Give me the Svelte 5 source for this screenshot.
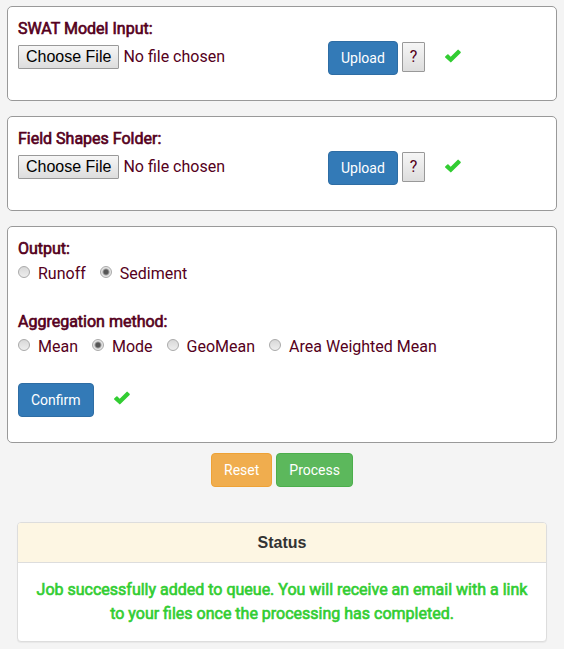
<script>
  const uploads = [
    { id: 'swat-model', label: 'SWAT Model Input:' },
    { id: 'field-shapes', label: 'Field Shapes Folder:' }
  ];
  const outputs = ['Runoff', 'Sediment'];
  const methods = ['Mean', 'Mode', 'GeoMean', 'Area Weighted Mean'];

  let output = $state('Sediment');
  let method = $state('Mode');

  function reset() {
    output = 'Sediment';
    method = 'Mode';
  }
</script>

{#snippet check()}
  <svg class="check" width="18" height="16" viewBox="0 0 18 16" role="img" aria-label="Done">
    <path d="M1.2 8.6 3.3 6.6Q3.9 6.1 4.5 6.6L6.7 8.7 13.5 1.9Q14.1 1.3 14.7 1.9L16.6 3.8Q17.1 4.4 16.6 5L7.4 14.1Q6.8 14.7 6.2 14.1L1.2 9.6Q.7 9.1 1.2 8.6Z" />
  </svg>
{/snippet}

<main>
  {#each uploads as item}
    <section class="card upload">
      <label class="heading" for={item.id}>{item.label}</label>
      <div class="upload-row">
        <input class="file" type="file" id={item.id} />
        <button class="btn primary" type="button">Upload</button>
        <button class="help" type="button">?</button>
        {@render check()}
      </div>
    </section>
  {/each}

  <section class="card options">
    <fieldset>
      <legend class="heading">Output:</legend>
      <div class="choices">
        {#each outputs as name}
          <label><input type="radio" name="output" value={name} bind:group={output} />{name}</label>
        {/each}
      </div>
    </fieldset>
    <fieldset>
      <legend class="heading">Aggregation method:</legend>
      <div class="choices">
        {#each methods as name}
          <label><input type="radio" name="method" value={name} bind:group={method} />{name}</label>
        {/each}
      </div>
    </fieldset>
    <div class="confirm">
      <button class="btn primary" type="button">Confirm</button>
      {@render check()}
    </div>
  </section>

  <div class="actions">
    <button class="btn warning" type="button" onclick={reset}>Reset</button>
    <button class="btn success" type="button">Process</button>
  </div>

  <section class="status">
    <h2>Status</h2>
    <p>Job successfully added to queue. You will receive an email with a link to your files once the processing has completed.</p>
  </section>
</main>

<style>
  :global(body) {
    background: #f4f4f4;
  }

  main {
    padding: 6px 7px 7px;
    font: 16px/24px Roboto, sans-serif;
    color: #550020;
  }

  main,
  main * {
    box-sizing: border-box;
  }

  .card {
    margin-bottom: 15px;
    padding: 10px 10px 25px;
    background: #fff;
    border: 1px solid #999;
    border-radius: 5px;
  }

  .heading {
    display: block;
    padding: 0;
    -webkit-text-stroke: 0.04em currentColor;
  }

  .upload-row {
    display: flex;
    align-items: center;
  }

  .file {
    flex: 0 1 310px;
    min-width: 0;
    height: 24px;
    margin: 0 0 3px;
    font: inherit;
    color: inherit;
  }

  .file::file-selector-button {
    height: 24px;
    margin: 0 4px 0 0;
    padding: 0 7px;
    font: 16px/20px "Liberation Sans", Arial, sans-serif;
    color: #000;
    background: linear-gradient(#f6f6f6, #ddd);
    border: 1px solid #999;
    border-radius: 1px;
  }

  .btn {
    height: 34px;
    padding: 6px 12px;
    font: 14px/20px Roboto, sans-serif;
    color: #fff;
    border: 1px solid;
    border-radius: 4px;
  }

  .primary {
    background: #337ab7;
    border-color: #2e6da4;
  }

  .warning {
    background: #f0ad4e;
    border-color: #eea236;
  }

  .success {
    background: #5cb85c;
    border-color: #4cae4c;
  }

  .help {
    height: 30px;
    margin: 0 19px 2px 4px;
    padding: 0 7px;
    font: 16px/24px Roboto, sans-serif;
    color: #550020;
    background: linear-gradient(#f6f6f6, #ddd);
    border: 1px solid #999;
    border-radius: 1px;
  }

  .check {
    flex: none;
    margin-bottom: 4px;
    fill: #32cd32;
  }

  fieldset {
    min-width: 0;
    margin: 0 0 24px;
    padding: 0;
    border: 0;
  }

  .choices {
    display: flex;
    flex-wrap: wrap;
    gap: 0 14px;
    padding-top: 1px;
  }

  .choices label {
    display: flex;
    gap: 8px;
  }

  .choices input {
    appearance: none;
    width: 12px;
    height: 12px;
    margin: 4px 0 0;
    background: linear-gradient(#d8d8d8, #eee);
    border: 1px solid #aaa;
    border-radius: 50%;
  }

  .choices input:checked {
    background: radial-gradient(circle, #555 0 2px, #e4e4e4 4px);
  }

  .confirm {
    display: flex;
    align-items: center;
    gap: 19px;
  }

  .actions {
    display: flex;
    justify-content: center;
    gap: 4px;
    margin: -5px 0 35px;
  }

  .status {
    margin: 0 10px;
    text-align: center;
    background: #fff;
    border: 1px solid #ddd;
    border-radius: 4px;
    box-shadow: 0 1px 1px rgba(0, 0, 0, 0.05);
  }

  h2 {
    margin: 0;
    padding: 10px 15px;
    font: bold 16px/19px "Liberation Sans", Arial, sans-serif;
    color: #333;
    background: #fdf6e3;
    border-bottom: 1px solid #ddd;
    border-radius: 3px 3px 0 0;
  }

  p {
    margin: 0;
    padding: 15px;
    color: #32cd32;
    -webkit-text-stroke: 0.04em currentColor;
  }
</style>
